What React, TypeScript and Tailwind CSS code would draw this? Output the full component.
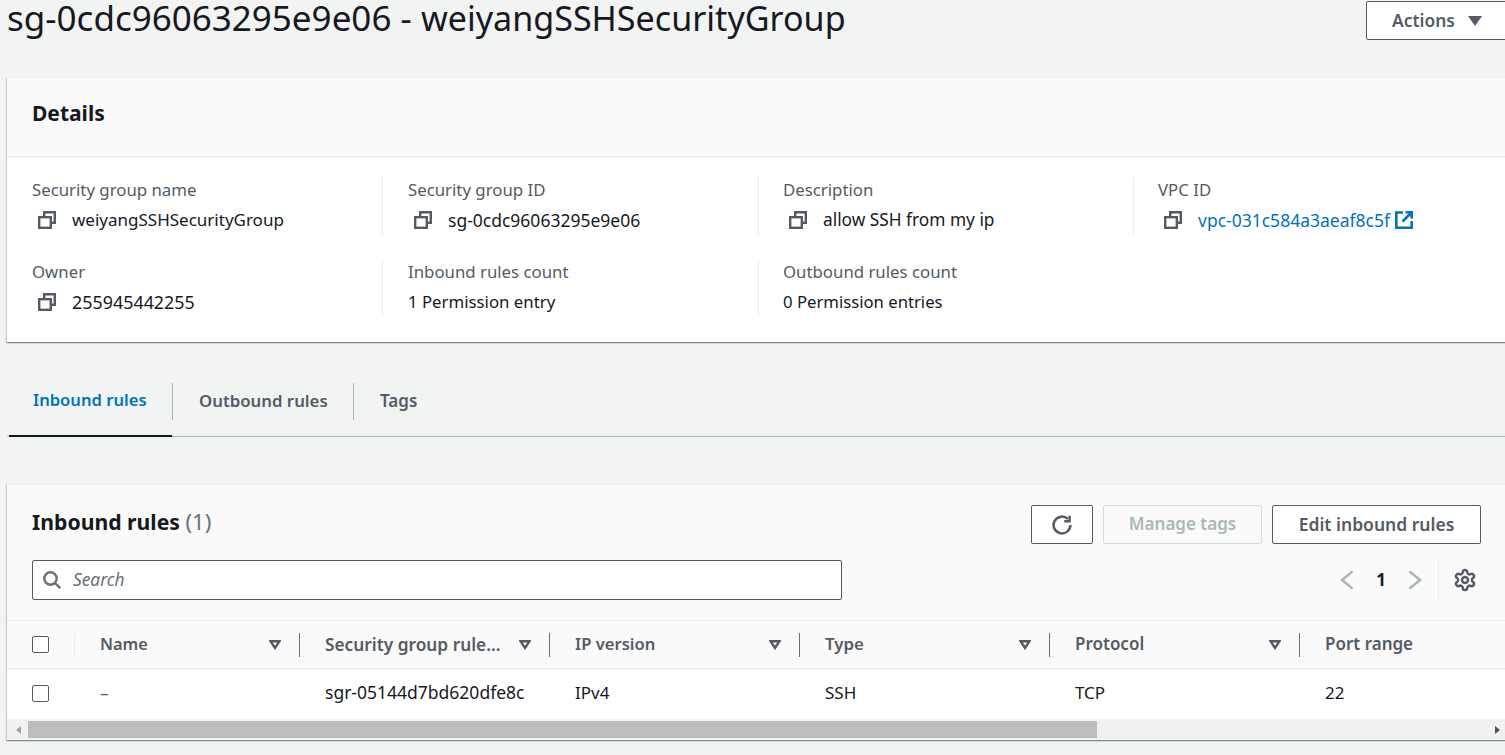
import React from "react";

const font = { fontFamily: '"Noto Sans", sans-serif' };

function CopyIcon() {
  return (
    <svg width="18" height="18" viewBox="0 0 18 18" fill="none" stroke="#545b64" strokeWidth="2.4" className="shrink-0">
      <path d="M6.2 5V1.2h10.6v10.6H13" />
      <rect x="1.2" y="6.2" width="11.6" height="10.6" />
    </svg>
  );
}

function FilterCaret() {
  return (
    <svg width="12" height="10" viewBox="0 0 12 10" fill="none" stroke="#545b64" strokeWidth="2.4" className="shrink-0">
      <path d="M1.6 1.3h8.8L6 8z" />
    </svg>
  );
}

function Field({ label, value, size, copy = true, link = false, sep = true }: { label: string; value: string; size: string; copy?: boolean; link?: boolean; sep?: boolean }) {
  return (
    <div className={`w-[351px] h-[58px] flex flex-col ${sep ? "border-r border-[#eaeded]" : ""}`}>
      <div className="text-[16.8px] leading-[26px] text-[#545b64] whitespace-nowrap">{label}</div>
      <div className={`flex items-center shrink-0 h-[32px] mt-[1px] text-[#16191f] whitespace-nowrap ${size}`}>
        {copy && <span className="w-[40px] pl-[6px] flex"><CopyIcon /></span>}
        {link ? (
          <span className="flex items-center gap-[5px] text-[#0073bb]">
            {value}
            <svg width="18" height="18" viewBox="0 0 18 18" fill="none" stroke="#0073bb" strokeWidth="2.6">
              <path d="M8 1.5H1.3v15.2H16.7V10" />
              <path d="M10.5 1.3h6.2v6.2M16.5 1.5L7.5 10.5" />
            </svg>
          </span>
        ) : (
          value
        )}
      </div>
    </div>
  );
}

function Button({ children, className = "" }: { children: React.ReactNode; className?: string }) {
  return (
    <div className={`h-[39px] flex items-center bg-white border border-[#545b64] rounded-[2px] font-semibold text-[#545b64] whitespace-nowrap ${className}`}>
      {children}
    </div>
  );
}

function HeaderCell({ label, size, caret = true, sep = true }: { label: string; size: string; caret?: boolean; sep?: boolean }) {
  return (
    <div className="flex items-center h-[24px] pl-[25px]">
      <span className={`flex-1 font-semibold text-[#545b64] whitespace-nowrap ${size}`}>{label}</span>
      {caret && <span className="mr-[18px] flex"><FilterCaret /></span>}
      {sep && <span className="w-px h-[24px] bg-[#687078]" />}
    </div>
  );
}

function Check() {
  return <span className="block w-[17px] h-[17px] bg-white border border-[#545b64] rounded-[2px]" />;
}

export default function App() {
  return (
    <div style={font} className="w-[1505px] h-[755px] overflow-hidden bg-[#f2f3f3] pl-[7px]">
      <div className="w-[1520px] h-[77px] flex items-start justify-between">
        <h1 className="text-[35px] leading-[36px] text-[#16191f] font-normal whitespace-nowrap">
          sg-0cdc96063295e9e06 - <span className="text-[34.1px]">weiyangSSHSecurityGroup</span>
        </h1>
        <Button className="w-[161px] mt-px pl-[25px] gap-[13px] text-[17.4px]">
          Actions
          <svg width="14" height="10" viewBox="0 0 14 10" fill="#545b64"><path d="M0 0h14L7 10z" /></svg>
        </Button>
      </div>

      <section className="w-[1520px] h-[265px] bg-white border-t border-[#eaeded] shadow-[0_1px_1px_0_rgba(0,28,36,0.3),1px_1px_1px_0_rgba(0,28,36,0.15),-1px_1px_1px_0_rgba(0,28,36,0.15)]">
        <div className="h-[79px] bg-[#fafafa] border-b border-[#eaeded] flex items-center pl-[25px] pb-[6px]">
          <h2 className="text-[21px] font-bold text-[#16191f]">Details</h2>
        </div>
        <div className="pl-[25px] pt-[20px] grid grid-cols-[376px_375px_375px_375px] gap-y-[24px]">
          <Field label="Security group name" value="weiyangSSHSecurityGroup" size="text-[17px]" />
          <Field label="Security group ID" value="sg-0cdc96063295e9e06" size="text-[17.5px]" />
          <Field label="Description" value="allow SSH from my ip" size="text-[17.3px]" />
          <Field label="VPC ID" value="vpc-031c584a3aeaf8c5f" size="text-[17.5px]" link sep={false} />
          <Field label="Owner" value="255945442255" size="text-[17.9px]" />
          <Field label="Inbound rules count" value="1 Permission entry" size="text-[16.8px]" copy={false} />
          <Field label="Outbound rules count" value="0 Permission entries" size="text-[16.7px]" copy={false} sep={false} />
        </div>
      </section>

      <nav className="mt-[24px] w-[1498px] h-[71px] border-b border-[#aab7b8] flex items-stretch">
        <div className="ml-[2px] w-[163px] border-b-2 border-[#16191f] -mb-px flex items-center pl-[24px] text-[#0073bb] text-[16.6px] font-semibold">Inbound rules</div>
        <div className="w-px h-[37px] mt-[17px] bg-[#aab7b8]" />
        <div className="w-[180px] flex items-center pl-[26px] text-[#545b64] text-[16.8px] font-semibold">Outbound rules</div>
        <div className="w-px h-[37px] mt-[17px] bg-[#aab7b8]" />
        <div className="flex items-center pl-[26px] text-[#545b64] text-[17px] font-semibold">Tags</div>
      </nav>

      <section className="mt-[47px] w-[1520px] h-[256px] bg-[#fafafa] border-t border-[#eaeded] shadow-[0_1px_1px_0_rgba(0,28,36,0.3),1px_1px_1px_0_rgba(0,28,36,0.15),-1px_1px_1px_0_rgba(0,28,36,0.15)]">
        <div className="w-[1498px] pl-[25px] pr-[24px] pt-[20px] h-[136px] border-b border-[#eaeded]">
          <div className="flex items-center justify-between h-[39px]">
            <h2 className="text-[21.2px] font-bold text-[#16191f] pb-[7px]">
              Inbound rules <span className="text-[22px] font-normal text-[#687078]">(1)</span>
            </h2>
            <div className="flex gap-[10px]">
              <Button className="w-[62px] justify-center">
                <svg width="20" height="20" viewBox="0 0 20 20" fill="none" stroke="#545b64" strokeWidth="2.5">
                  <path d="M18.4 10a8.4 8.4 0 1 1-2.6-6.1" />
                  <path d="M17.6 0.8v5.4h-5.4" />
                </svg>
              </Button>
              <div className="w-[159px] h-[39px] pb-px flex items-center justify-center bg-[#fafafa] border border-[#d5dbdb] rounded-[2px] text-[17px] font-semibold text-[#aab7b8]">Manage tags</div>
              <Button className="w-[209px] pb-px justify-center text-[17.5px]">Edit inbound rules</Button>
            </div>
          </div>
          <div className="flex items-center justify-between mt-[16px] h-[40px]">
            <div className="w-[810px] h-[40px] bg-white border border-[#545b64] rounded-[2px] flex items-center pl-[10px] gap-[12px]">
              <svg width="18" height="18" viewBox="0 0 18 18" fill="none" stroke="#687078" strokeWidth="2.4">
                <circle cx="7.5" cy="7.5" r="6.2" />
                <path d="M12 12l5.2 5.2" />
              </svg>
              <span className="text-[17.3px] italic text-[#687078]">Search</span>
            </div>
            <div className="flex items-center h-[40px]">
              <svg width="14" height="20" viewBox="0 0 14 20" fill="none" stroke="#aab7b8" strokeWidth="2.5"><path d="M12.5 1.5L2 10l10.5 8.5" /></svg>
              <span className="w-[54px] text-center text-[17px] font-bold text-[#16191f]">1</span>
              <svg width="14" height="20" viewBox="0 0 14 20" fill="none" stroke="#aab7b8" strokeWidth="2.5"><path d="M1.5 1.5L12 10 1.5 18.5" /></svg>
              <span className="ml-[16px] w-px h-[40px] bg-[#eaeded]" />
              <svg className="ml-[14px] mr-[4px]" width="24" height="24" viewBox="0 0 24 24" fill="none" stroke="#545b64" strokeWidth="2.4" strokeLinecap="round" strokeLinejoin="round">
                <path d="M12.22 2h-.44a2 2 0 0 0-2 2v.18a2 2 0 0 1-1 1.73l-.43.25a2 2 0 0 1-2 0l-.15-.08a2 2 0 0 0-2.73.73l-.22.38a2 2 0 0 0 .73 2.73l.15.1a2 2 0 0 1 1 1.72v.51a2 2 0 0 1-1 1.74l-.15.09a2 2 0 0 0-.73 2.73l.22.38a2 2 0 0 0 2.73.73l.15-.08a2 2 0 0 1 2 0l.43.25a2 2 0 0 1 1 1.73V20a2 2 0 0 0 2 2h.44a2 2 0 0 0 2-2v-.18a2 2 0 0 1 1-1.73l.43-.25a2 2 0 0 1 2 0l.15.08a2 2 0 0 0 2.73-.73l.22-.39a2 2 0 0 0-.73-2.73l-.15-.08a2 2 0 0 1-1-1.74v-.5a2 2 0 0 1 1-1.74l.15-.09a2 2 0 0 0 .73-2.73l-.22-.38a2 2 0 0 0-2.73-.73l-.15.08a2 2 0 0 1-2 0l-.43-.25a2 2 0 0 1-1-1.73V4a2 2 0 0 0-2-2z" />
                <circle cx="12" cy="12" r="3" />
              </svg>
            </div>
          </div>
        </div>

        <div className="w-[1498px] h-[48px] border-b border-[#eaeded] grid grid-cols-[68px_225px_250px_250px_250px_250px_205px] items-center">
          <div className="flex items-center pl-[25px] h-[24px] justify-between">
            <Check />
            <span className="w-px h-[24px] bg-[#eaeded]" />
          </div>
          <HeaderCell label="Name" size="text-[16.4px]" />
          <HeaderCell label="Security group rule..." size="text-[17.3px]" />
          <HeaderCell label="IP version" size="text-[16.6px]" />
          <HeaderCell label="Type" size="text-[16.9px] mb-[2px]" />
          <HeaderCell label="Protocol" size="text-[17px] mb-[2px]" />
          <HeaderCell label="Port range" size="text-[17px] mb-[2px]" caret={false} sep={false} />
        </div>

        <div className="w-[1498px] h-[50px] pb-px bg-white grid grid-cols-[68px_225px_250px_250px_250px_250px_205px] items-center text-[17px] text-[#16191f]">
          <div className="pl-[25px]"><Check /></div>
          <div className="pl-[25px] mb-[2px] text-[#545b64]">–</div>
          <div className="pl-[25px] mb-[2px] text-[17.5px]">sgr-05144d7bd620dfe8c</div>
          <div className="pl-[25px] mb-[2px]">IPv4</div>
          <div className="pl-[25px] mb-[2px]">SSH</div>
          <div className="pl-[25px] mb-[2px]">TCP</div>
          <div className="pl-[25px] mb-[2px]">22</div>
        </div>

        <div className="w-[1498px] h-[20px] bg-[#f1f1f1] flex items-center pt-px">
          <span className="w-[21px] flex justify-center pl-[2px]">
            <svg width="5" height="8" viewBox="0 0 5 8" fill="#a3a3a3"><path d="M5 0v8L0 4z" /></svg>
          </span>
          <span className="w-[1069px] h-[17px] bg-[#bdbdbd]" />
          <span className="flex-1 flex justify-end pr-[5px]">
            <svg width="5" height="8" viewBox="0 0 5 8" fill="#505050"><path d="M0 0v8l5-4z" /></svg>
          </span>
        </div>
      </section>
    </div>
  );
}
